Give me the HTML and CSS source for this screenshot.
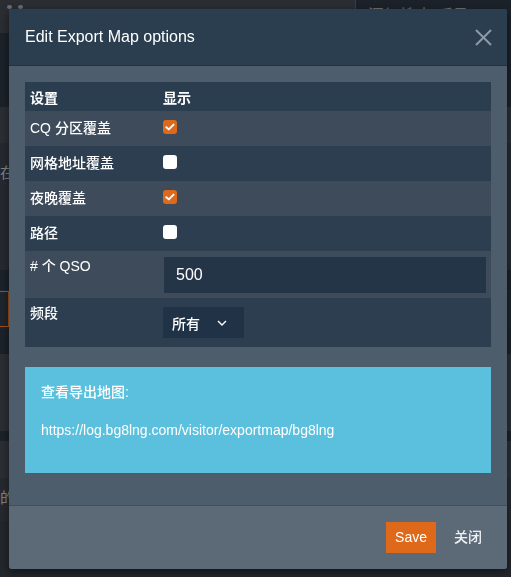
FILE: index.html
```html
<!DOCTYPE html>
<html lang="zh">
<head>
<meta charset="utf-8">
<title>Edit Export Map options</title>
<link rel="stylesheet" href="styles.css">
</head>
<body>
<div class="page">
  <div class="band b-top">
    <div class="dots"><span class="dot"></span><span class="dot"></span></div>
    <div class="search-panel">添加搜索 呼号</div>
  </div>
  <div class="band b-dark h74"></div>
  <div class="band b-mid h36"></div>
  <div class="band b-soft h127"><span class="bg-text">在</span></div>
  <div class="band b-dark h20"></div>
  <div class="band b-deep h38"><span class="bg-box"></span></div>
  <div class="band b-dark h25"></div>
  <div class="band b-mid h77"></div>
  <div class="band b-dark h10"></div>
  <div class="band b-mid h37"></div>
  <div class="band b-soft h43"><span class="bg-text low">的地</span></div>
  <div class="band b-base h57"></div>
</div>

<div class="modal">
  <div class="modal-header">
    <h5 class="modal-title">Edit Export Map options</h5>
    <svg class="close-x" width="17" height="17" viewBox="0 0 17 17"><path d="M1 1 L16 16 M16 1 L1 16" stroke="#8e9aa6" stroke-width="2" fill="none"/></svg>
  </div>
  <div class="modal-body">
    <table class="opts">
      <colgroup><col class="c1"><col></colgroup>
      <thead>
        <tr><th>设置</th><th>显示</th></tr>
      </thead>
      <tbody>
        <tr class="odd"><td>CQ 分区覆盖</td><td><span class="cb on"><svg width="14" height="14" viewBox="0 0 14 14"><path d="M3.3 7.2 L5.8 9.4 L10.6 4.6" stroke="#fff" stroke-width="1.9" fill="none" stroke-linecap="round" stroke-linejoin="round"/></svg></span></td></tr>
        <tr class="even"><td>网格地址覆盖</td><td><span class="cb"></span></td></tr>
        <tr class="odd"><td>夜晚覆盖</td><td><span class="cb on"><svg width="14" height="14" viewBox="0 0 14 14"><path d="M3.3 7.2 L5.8 9.4 L10.6 4.6" stroke="#fff" stroke-width="1.9" fill="none" stroke-linecap="round" stroke-linejoin="round"/></svg></span></td></tr>
        <tr class="even"><td>路径</td><td><span class="cb"></span></td></tr>
        <tr class="odd tall"><td class="top-label"># 个 QSO</td><td class="input-cell"><input class="field" type="text" value="500"></td></tr>
        <tr class="even taller"><td class="top-label">频段</td><td><div class="select"><span>所有</span><svg width="10" height="6" viewBox="0 0 10 6"><path d="M1 1 L5 5 L9 1" stroke="#fff" stroke-width="1.4" fill="none"/></svg></div></td></tr>
      </tbody>
    </table>
    <div class="alert">
      <p class="alert-title">查看导出地图:</p>
      <p class="alert-link">https://log.bg8lng.com/visitor/exportmap/bg8lng</p>
    </div>
  </div>
  <div class="modal-footer">
    <button class="btn btn-primary">Save</button>
    <button class="btn btn-link">关闭</button>
  </div>
</div>
</body>
</html>
```
FILE: styles.css
```css
* { box-sizing: border-box; }
html, body { margin: 0; height: 100%; }
body {
  font-family: "Liberation Sans", "Noto Sans CJK SC", sans-serif;
  font-size: 14px;
  font-weight: 500;
  background: #23272d;
  color: #fff;
  overflow: hidden;
}

/* background page */
.page { width: 100%; }
.band { width: 100%; }
.b-top { height: 33px; background: #2a2d32; display: flex; justify-content: space-between; }
.b-dark { background: #1b2229; }
.b-mid { background: #2b2f34; }
.b-soft { background: #262a30; }
.b-deep { background: #1e252c; }
.b-base { background: #23272d; }
.h74 { height: 74px; }
.h36 { height: 36px; }
.h127 { height: 127px; }
.h20 { height: 20px; }
.h38 { height: 38px; }
.h25 { height: 25px; }
.h77 { height: 77px; }
.h10 { height: 10px; }
.h37 { height: 37px; }
.h43 { height: 43px; }
.h57 { height: 57px; }

.dots { display: flex; gap: 6px; padding: 5px 0 0 7px; }
.dot { width: 5px; height: 4px; border-radius: 50%; background: #6a6f75; }
.search-panel {
  width: 156px;
  background: #1c2229;
  border-left: 1px solid #3a3f45;
  color: #6b7076;
  font-size: 16px;
  font-weight: normal;
  padding: 2px 0 0 12px;
}
.bg-text { display: block; color: #80858b; font-size: 15px; font-weight: normal; padding-top: 18px; }
.bg-text.low { padding-top: 8px; }
.bg-box { display: block; width: 9px; height: 36px; margin-top: 1px; border: 1px solid #a4511b; border-left: none; }

/* modal */
.modal {
  position: fixed;
  left: 9px;
  top: 9px;
  width: 498px;
  background: #4e5d6c;
  border-radius: 3px;
  overflow: hidden;
  box-shadow: 0 3px 9px rgba(0, 0, 0, 0.5);
}
.modal-header {
  height: 57px;
  display: flex;
  align-items: center;
  justify-content: space-between;
  padding: 0 15px 0 16px;
  background: #2b3e50;
  border-bottom: 1px solid #23323f;
}
.modal-title { margin: 0; font-size: 16px; font-weight: normal; color: #fff; }
.close-x { display: block; }

.modal-body { padding: 16px 16px 32px; }
.opts { width: 100%; border-collapse: collapse; }
.c1 { width: 133px; }
.opts th {
  height: 29px;
  padding: 0 5px;
  text-align: left;
  font-weight: bold;
  background: #2b3e50;
}
.opts td { height: 35px; padding: 0 5px 3px; vertical-align: middle; }
.opts tr.odd { background: #3d4b5a; }
.opts tr.even { background: #2c3e50; }
.opts tr.tall td { height: 47px; }
.opts tr.taller td { height: 49px; }
.opts td.top-label { vertical-align: top; padding-top: 5px; padding-bottom: 0; line-height: 20px; }
.opts td.input-cell { padding: 1px 5px 0 6px; }
.opts tr.taller td { padding-bottom: 0; }

.cb {
  display: block;
  width: 14px;
  height: 14px;
  border-radius: 3px;
  background: #fff;
}
.cb.on { background: #df691a; }
.cb svg { display: block; }

.field {
  display: block;
  width: 100%;
  height: 36px;
  border: none;
  background: #243548;
  color: #fff;
  font-family: inherit;
  font-size: 16px;
  font-weight: normal;
  padding: 0 12px;
  outline: none;
}
.select {
  display: flex;
  align-items: center;
  width: 81px;
  height: 31px;
  padding-left: 9px;
  background: #1f3246;
  font-size: 14px;
}
.select svg { margin-left: 17px; }

.alert {
  margin-top: 20px;
  height: 106px;
  background: #5bc0de;
  padding: 15px 16px;
}
.alert p { margin: 0; line-height: 20px; }
.alert-link { margin-top: 18px !important; }

.modal-footer {
  height: 64px;
  border-top: 1px solid #434f5b;
  background: #5c6976;
  display: flex;
  justify-content: flex-end;
  align-items: center;
  gap: 9px;
  padding: 0 16px;
}
.btn {
  height: 31px;
  padding: 0 9px;
  border: none;
  font-family: inherit;
  font-size: 14px;
  font-weight: 500;
  line-height: 31px;
}
.btn-primary { background: #df691a; color: #fff; }
.btn-link { background: transparent; color: #eef1f4; }
```
